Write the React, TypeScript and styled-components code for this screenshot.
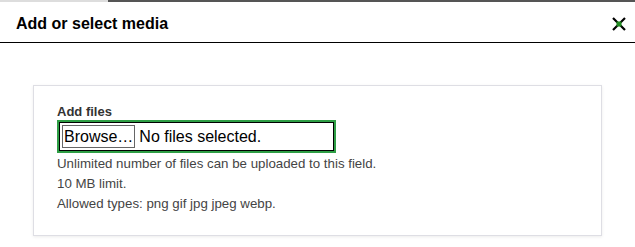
import React from "react";
import styled, { createGlobalStyle } from "styled-components";

const GlobalStyle = createGlobalStyle`
  html, body {
    margin: 0;
    padding: 0;
    background: #fff;
    font-family: "Liberation Sans", Arial, sans-serif;
  }
`;

const Dialog = styled.div`
  width: 635px;
  height: 247px;
  display: flex;
  flex-direction: column;
  background: #fff;
  overflow: hidden;
`;

const TopStrip = styled.div`
  display: flex;
  height: 2px;
`;

const StripPart = styled.div<{ $dark?: boolean; $w?: string }>`
  flex: ${(p) => (p.$w ? `0 0 ${p.$w}` : "1")};
  background: ${(p) => (p.$dark ? "#555" : "#ddd")};
`;

const TitleBar = styled.div`
  height: 41px;
  display: flex;
  align-items: center;
  justify-content: space-between;
  padding: 1px 7px 0 16px;
  box-sizing: border-box;
  border-bottom: 1px solid #000;
`;

const Title = styled.h1`
  margin: 0;
  margin-top: 2px;
  font-size: 16px;
  font-weight: 700;
  color: #000;
`;

const CloseButton = styled.button`
  width: 18px;
  height: 18px;
  border: none;
  background: transparent;
  padding: 0;
  display: flex;
  align-items: center;
  justify-content: center;
  margin-top: 3px;
`;

const Body = styled.div`
  padding: 42px 33px 0 33px;
`;

const Card = styled.div`
  width: 569px;
  box-sizing: border-box;
  height: 151px;
  border: 1px solid #dedee4;
  box-shadow: 0 1px 3px rgba(0, 0, 0, 0.08);
  padding: 18px 23px;
  display: flex;
  flex-direction: column;
`;

const Label = styled.label`
  font-size: 13px;
  font-weight: 700;
  color: #333;
  line-height: 16px;
`;

const FileBox = styled.div`
  width: 279px;
  height: 33px;
  box-sizing: border-box;
  border: 2px solid #2e9e45;
  box-shadow: inset 0 0 0 1px #000;
  display: flex;
  align-items: center;
  padding: 0 3px;
  gap: 4px;
  font-size: 16px;
  color: #000;
`;

const Browse = styled.span`
  border: 1px solid #666;
  padding: 1px 1px;
  line-height: 19px;
`;

const Help = styled.div`
  margin-top: 1px;
  font-size: 13.3px;
  color: #444;
  line-height: 20px;
`;

const CloseIcon = () => (
  <svg width="16" height="16" viewBox="0 0 16 16">
    <path d="M2 2 L14 14 M14 2 L2 14" stroke="#000" strokeWidth="2.2" />
    <rect x="5.5" y="5.5" width="5" height="5" fill="#1f8a1f" />
  </svg>
);

export default function App() {
  return (
    <>
      <GlobalStyle />
      <Dialog>
        <TopStrip>
          <StripPart $w="108px" />
          <StripPart $dark />
        </TopStrip>
        <TitleBar>
          <Title>Add or select media</Title>
          <CloseButton aria-label="Close">
            <CloseIcon />
          </CloseButton>
        </TitleBar>
        <Body>
          <Card>
            <Label>Add files</Label>
            <FileBox>
              <Browse>Browse…</Browse>
              <span>No files selected.</span>
            </FileBox>
            <Help>
              Unlimited number of files can be uploaded to this field.
              <br />
              10 MB limit.
              <br />
              Allowed types: png gif jpg jpeg webp.
            </Help>
          </Card>
        </Body>
      </Dialog>
    </>
  );
}
